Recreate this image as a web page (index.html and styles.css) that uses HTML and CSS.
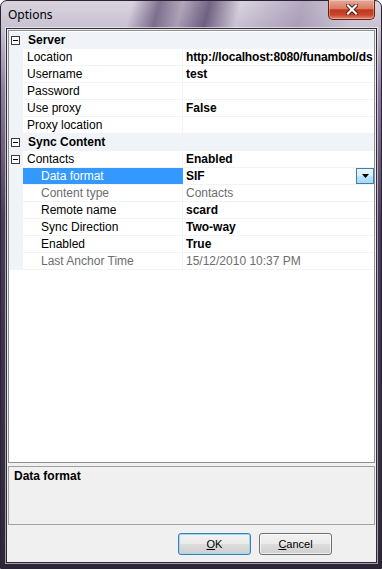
FILE: index.html
```html
<!DOCTYPE html>
<html lang="en">
<head>
    <meta charset="UTF-8">
    <title>Options</title>
    <link rel="stylesheet" href="styles.css">
</head>
<body>
    <div class="window">
        <div class="titlebar">
            <span class="title">Options</span>
            <div class="close">
                <svg width="12" height="11" viewBox="0 0 12 11">
                    <path d="M2 1.5 L10 9.5 M10 1.5 L2 9.5" stroke="#4a1410" stroke-width="4" stroke-linecap="square"/>
                    <path d="M2 1.5 L10 9.5 M10 1.5 L2 9.5" stroke="#fff" stroke-width="2.2" stroke-linecap="square"/>
                </svg>
            </div>
        </div>
        <div class="client">
            <div class="grid">
                <div class="row cat">
                    <span class="margin"><i class="box"></i></span>
                    <span class="name">Server</span>
                </div>
                <div class="row">
                    <span class="margin"></span>
                    <span class="label">Location</span>
                    <span class="value url">http://localhost:8080/funambol/ds</span>
                </div>
                <div class="row">
                    <span class="margin"></span>
                    <span class="label">Username</span>
                    <span class="value">test</span>
                </div>
                <div class="row">
                    <span class="margin"></span>
                    <span class="label">Password</span>
                    <span class="value"></span>
                </div>
                <div class="row">
                    <span class="margin"></span>
                    <span class="label">Use proxy</span>
                    <span class="value">False</span>
                </div>
                <div class="row">
                    <span class="margin"></span>
                    <span class="label">Proxy location</span>
                    <span class="value"></span>
                </div>
                <div class="row cat">
                    <span class="margin"><i class="box"></i></span>
                    <span class="name">Sync Content</span>
                </div>
                <div class="row">
                    <span class="margin"><i class="box"></i></span>
                    <span class="label">Contacts</span>
                    <span class="value">Enabled</span>
                </div>
                <div class="row sub sel">
                    <span class="margin"></span>
                    <span class="label">Data format</span>
                    <span class="value">
                        <span>SIF</span>
                        <span class="dd">
                            <svg width="7" height="4" viewBox="0 0 7 4"><polygon points="0,0 7,0 3.5,4" fill="#000"/></svg>
                        </span>
                    </span>
                </div>
                <div class="row sub dim">
                    <span class="margin"></span>
                    <span class="label">Content type</span>
                    <span class="value">Contacts</span>
                </div>
                <div class="row sub">
                    <span class="margin"></span>
                    <span class="label">Remote name</span>
                    <span class="value">scard</span>
                </div>
                <div class="row sub">
                    <span class="margin"></span>
                    <span class="label">Sync Direction</span>
                    <span class="value">Two-way</span>
                </div>
                <div class="row sub">
                    <span class="margin"></span>
                    <span class="label">Enabled</span>
                    <span class="value">True</span>
                </div>
                <div class="row sub dim">
                    <span class="margin"></span>
                    <span class="label">Last Anchor Time</span>
                    <span class="value">15/12/2010 10:37 PM</span>
                </div>
            </div>
            <div class="desc">Data format</div>
            <div class="buttons">
                <button class="btn default"><u>O</u>K</button>
                <button class="btn"><u>C</u>ancel</button>
            </div>
        </div>
    </div>
</body>
</html>
```

FILE: styles.css
```css
* {
    margin: 0;
    padding: 0;
    box-sizing: border-box;
}
body {
    background: #fff;
    font-family: "Liberation Sans", Arial, sans-serif;
    font-size: 12px;
    color: #000;
}
.window {
    width: 382px;
    height: 569px;
    display: flex;
    flex-direction: column;
    padding: 0 4px 5px 5px;
    border: 1px solid #2a2333;
    border-radius: 7px 7px 0 0;
    background:
        linear-gradient(105deg, rgba(0,0,0,0) 34%, rgba(70,50,95,.6) 41%, rgba(90,70,110,.3) 47%, rgba(60,40,85,.65) 54%, rgba(0,0,0,0) 62%, rgba(110,90,135,.35) 78%, rgba(0,0,0,0) 92%) top left / 100% 30px no-repeat,
        linear-gradient(to bottom, #d8d4dd 0px, #c8c0d1 28px, #8d7d9d 90px, #4a3c58 220px, #2e2637 569px);
}
.titlebar {
    height: 27px;
    display: flex;
    align-items: flex-start;
}
.title {
    font-family: "Noto Sans", "Open Sans", sans-serif;
    font-size: 12px;
    padding: 5px 0 0 2px;
    color: #000;
}
.close {
    margin-left: auto;
    margin-top: -1px;
    margin-right: 2px;
    width: 47px;
    height: 20px;
    display: flex;
    justify-content: center;
    align-items: center;
    border: 1px solid #6b1e14;
    border-top: none;
    border-radius: 0 0 5px 5px;
    background: linear-gradient(to bottom, #e6ab9c 0%, #d97a64 45%, #c2371e 52%, #c8452b 78%, #e08a72 100%);
    box-shadow: inset 0 0 0 1px rgba(255,255,255,.3);
}
.client {
    flex: 1;
    display: flex;
    flex-direction: column;
    padding: 1px;
    background: #f0f0f0;
    border: 1px solid #2d2a38;
    box-shadow: 0 0 0 1px rgba(255,255,255,.55);
}
.grid {
    height: 433px;
    background: #fff;
    border: 1px solid #8e8f8f;
    padding-top: 1px;
    margin-bottom: 3px;
}
.row {
    display: flex;
    height: 17px;
    border-bottom: 1px solid #f0f4f9;
}
.margin {
    flex: none;
    width: 14px;
    background: #f0f4f9;
    display: flex;
    align-items: center;
}
.box {
    display: block;
    width: 9px;
    height: 9px;
    margin-left: 2px;
    border: 1px solid #3c3c3c;
    background: #fff;
    position: relative;
}
.box::after {
    content: "";
    position: absolute;
    left: 1px;
    top: 3px;
    width: 5px;
    height: 1px;
    background: #000;
}
.cat {
    background: #f0f4f9;
}
.cat .name {
    font-weight: bold;
    padding-left: 5px;
    line-height: 17px;
}
.label {
    flex: none;
    width: 159px;
    padding-left: 4px;
    line-height: 17px;
    white-space: nowrap;
    overflow: hidden;
}
.sub .label {
    padding-left: 18px;
}
.value {
    flex: 1;
    display: flex;
    justify-content: space-between;
    border-left: 1px solid #f0f4f9;
    padding-left: 3px;
    line-height: 17px;
    font-weight: bold;
    white-space: nowrap;
    overflow: hidden;
}
.url {
    letter-spacing: -0.15px;
}
.dim .label,
.dim .value {
    color: #6d6d6d;
    font-weight: normal;
}
.sel .label {
    background: #3399ff;
    color: #fff;
}
.sel .value {
    border-left-color: #3399ff;
}
.dd {
    width: 18px;
    height: 16px;
    border: 1px solid #3c7fb1;
    background: linear-gradient(to bottom, #eaf6fd 0%, #d9f0fc 50%, #bee6fd 51%, #a7d9f5 100%);
    display: flex;
    justify-content: center;
    align-items: center;
}
.desc {
    height: 59px;
    border: 1px solid #a0a0a0;
    background: #f0f0f0;
    padding: 2px 5px;
    font-weight: bold;
    line-height: 15px;
}
.buttons {
    flex: 1;
    display: flex;
    justify-content: flex-end;
    align-items: flex-start;
    gap: 8px;
    padding: 8px 43px 0 0;
}
.btn {
    width: 73px;
    height: 22px;
    font-family: "Liberation Sans", Arial, sans-serif;
    font-size: 11px;
    color: #000;
    border: 1px solid #707070;
    border-radius: 3px;
    background: linear-gradient(to bottom, #f2f2f2 0%, #ebebeb 50%, #dddddd 51%, #cfcfcf 100%);
    box-shadow: inset 0 0 0 1px rgba(255,255,255,.7);
}
.default {
    border-color: #3c7fb1;
    box-shadow: inset 0 0 0 1px #9fd8f7;
}
```
